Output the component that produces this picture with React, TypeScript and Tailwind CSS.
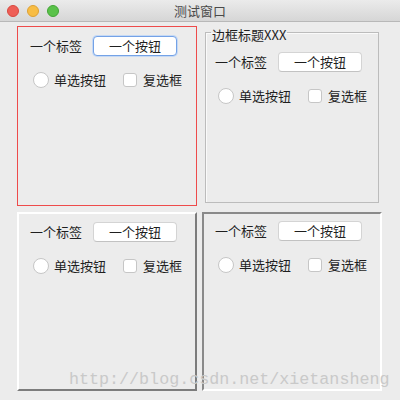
import React from 'react';

const font = { fontFamily: '"Noto Sans CJK SC", "Noto Sans", sans-serif' };

function Controls({ focused = false }: { focused?: boolean }) {
  return (
    <div className="text-[13px] leading-[20px] text-[#1f1f1f]">
      {/* Label + button */}
      <div className="flex items-center">
        <span className="w-[52px] whitespace-nowrap">一个标签</span>
        <button
          className={
            focused
              ? 'ml-[11px] h-[20px] w-[84px] rounded-[4px] border border-[#74a2e6] bg-white leading-[18px] shadow-[0_0_0_1px_#c5d9f5]'
              : 'ml-[11px] h-[20px] w-[84px] rounded-[4px] border border-[#d4d4d4] border-b-[#c2c2c2] bg-white leading-[18px]'
          }
        >
          一个按钮
        </button>
      </div>

      {/* Radio + checkbox */}
      <div className="mt-[14px] flex h-[20px] items-center pl-[3px]">
        <span className="h-[16px] w-[16px] rounded-full border border-[#c6c6c6] bg-white" />
        <span className="ml-[5px] w-[52px] whitespace-nowrap">单选按钮</span>
        <span className="ml-[17px] h-[14px] w-[14px] rounded-[3px] border border-[#c6c6c6] bg-white" />
        <span className="ml-[6px] whitespace-nowrap">复选框</span>
      </div>
    </div>
  );
}

export default function App() {
  return (
    <div className="relative h-[400px] w-[400px] overflow-hidden bg-[#ececec]" style={font}>
      {/* Title bar */}
      <div className="relative flex h-[22px] items-center justify-center border-b border-[#b8b8b8] bg-gradient-to-b from-[#ebebeb] to-[#d6d6d6]">
        <div className="absolute left-[7px] top-[5px] flex gap-[8px]">
          <span className="h-[12px] w-[12px] rounded-full bg-[#ee5e56] border border-[#d8483f]" />
          <span className="h-[12px] w-[12px] rounded-full bg-[#f8bd44] border border-[#dea134]" />
          <span className="h-[12px] w-[12px] rounded-full bg-[#5ac24a] border border-[#43a536]" />
        </div>
        <span className="text-[13px] text-[#4a4a4a]">测试窗口</span>
      </div>

      {/* Panels */}
      <div className="grid grid-cols-[180px_180px] grid-rows-[180px_179px] gap-x-[5px] gap-y-[6px] pl-[17px] pt-[4px]">
        {/* Line border */}
        <div className="border border-[#ee4b4b] pl-[12px] pt-[9px]">
          <Controls focused />
        </div>

        {/* Titled border */}
        <div>
          <fieldset className="mx-[3px] h-[177px] border border-[#bcbcbc] px-[5px] shadow-[inset_1px_1px_0_#fafafa]">
            <legend className="h-[12px] px-[1px] text-[13px] leading-[12px] text-[#1f1f1f]">
              <span className="relative top-[3px]">边框标题XXX</span>
            </legend>
            <div className="pl-[4px] pt-[14px]">
              <Controls />
            </div>
          </fieldset>
        </div>

        {/* Raised bevel */}
        <div className="border-2 border-t-[#ffffff] border-l-[#ffffff] border-b-[#7c7c7c] border-r-[#7c7c7c] pl-[11px] pt-[8px]">
          <Controls />
        </div>

        {/* Lowered bevel */}
        <div className="border-2 border-t-[#8a8a8a] border-l-[#8a8a8a] border-b-[#ffffff] border-r-[#ffffff] pl-[11px] pt-[7px]">
          <Controls />
        </div>
      </div>

      {/* Watermark */}
      <div className="pointer-events-none absolute left-[69px] top-[369px] whitespace-nowrap text-[16.7px] leading-[22px] text-[#c9c9c9]" style={{ fontFamily: '"Liberation Mono", monospace' }}>
        http://blog.csdn.net/xietansheng
      </div>
    </div>
  );
}
